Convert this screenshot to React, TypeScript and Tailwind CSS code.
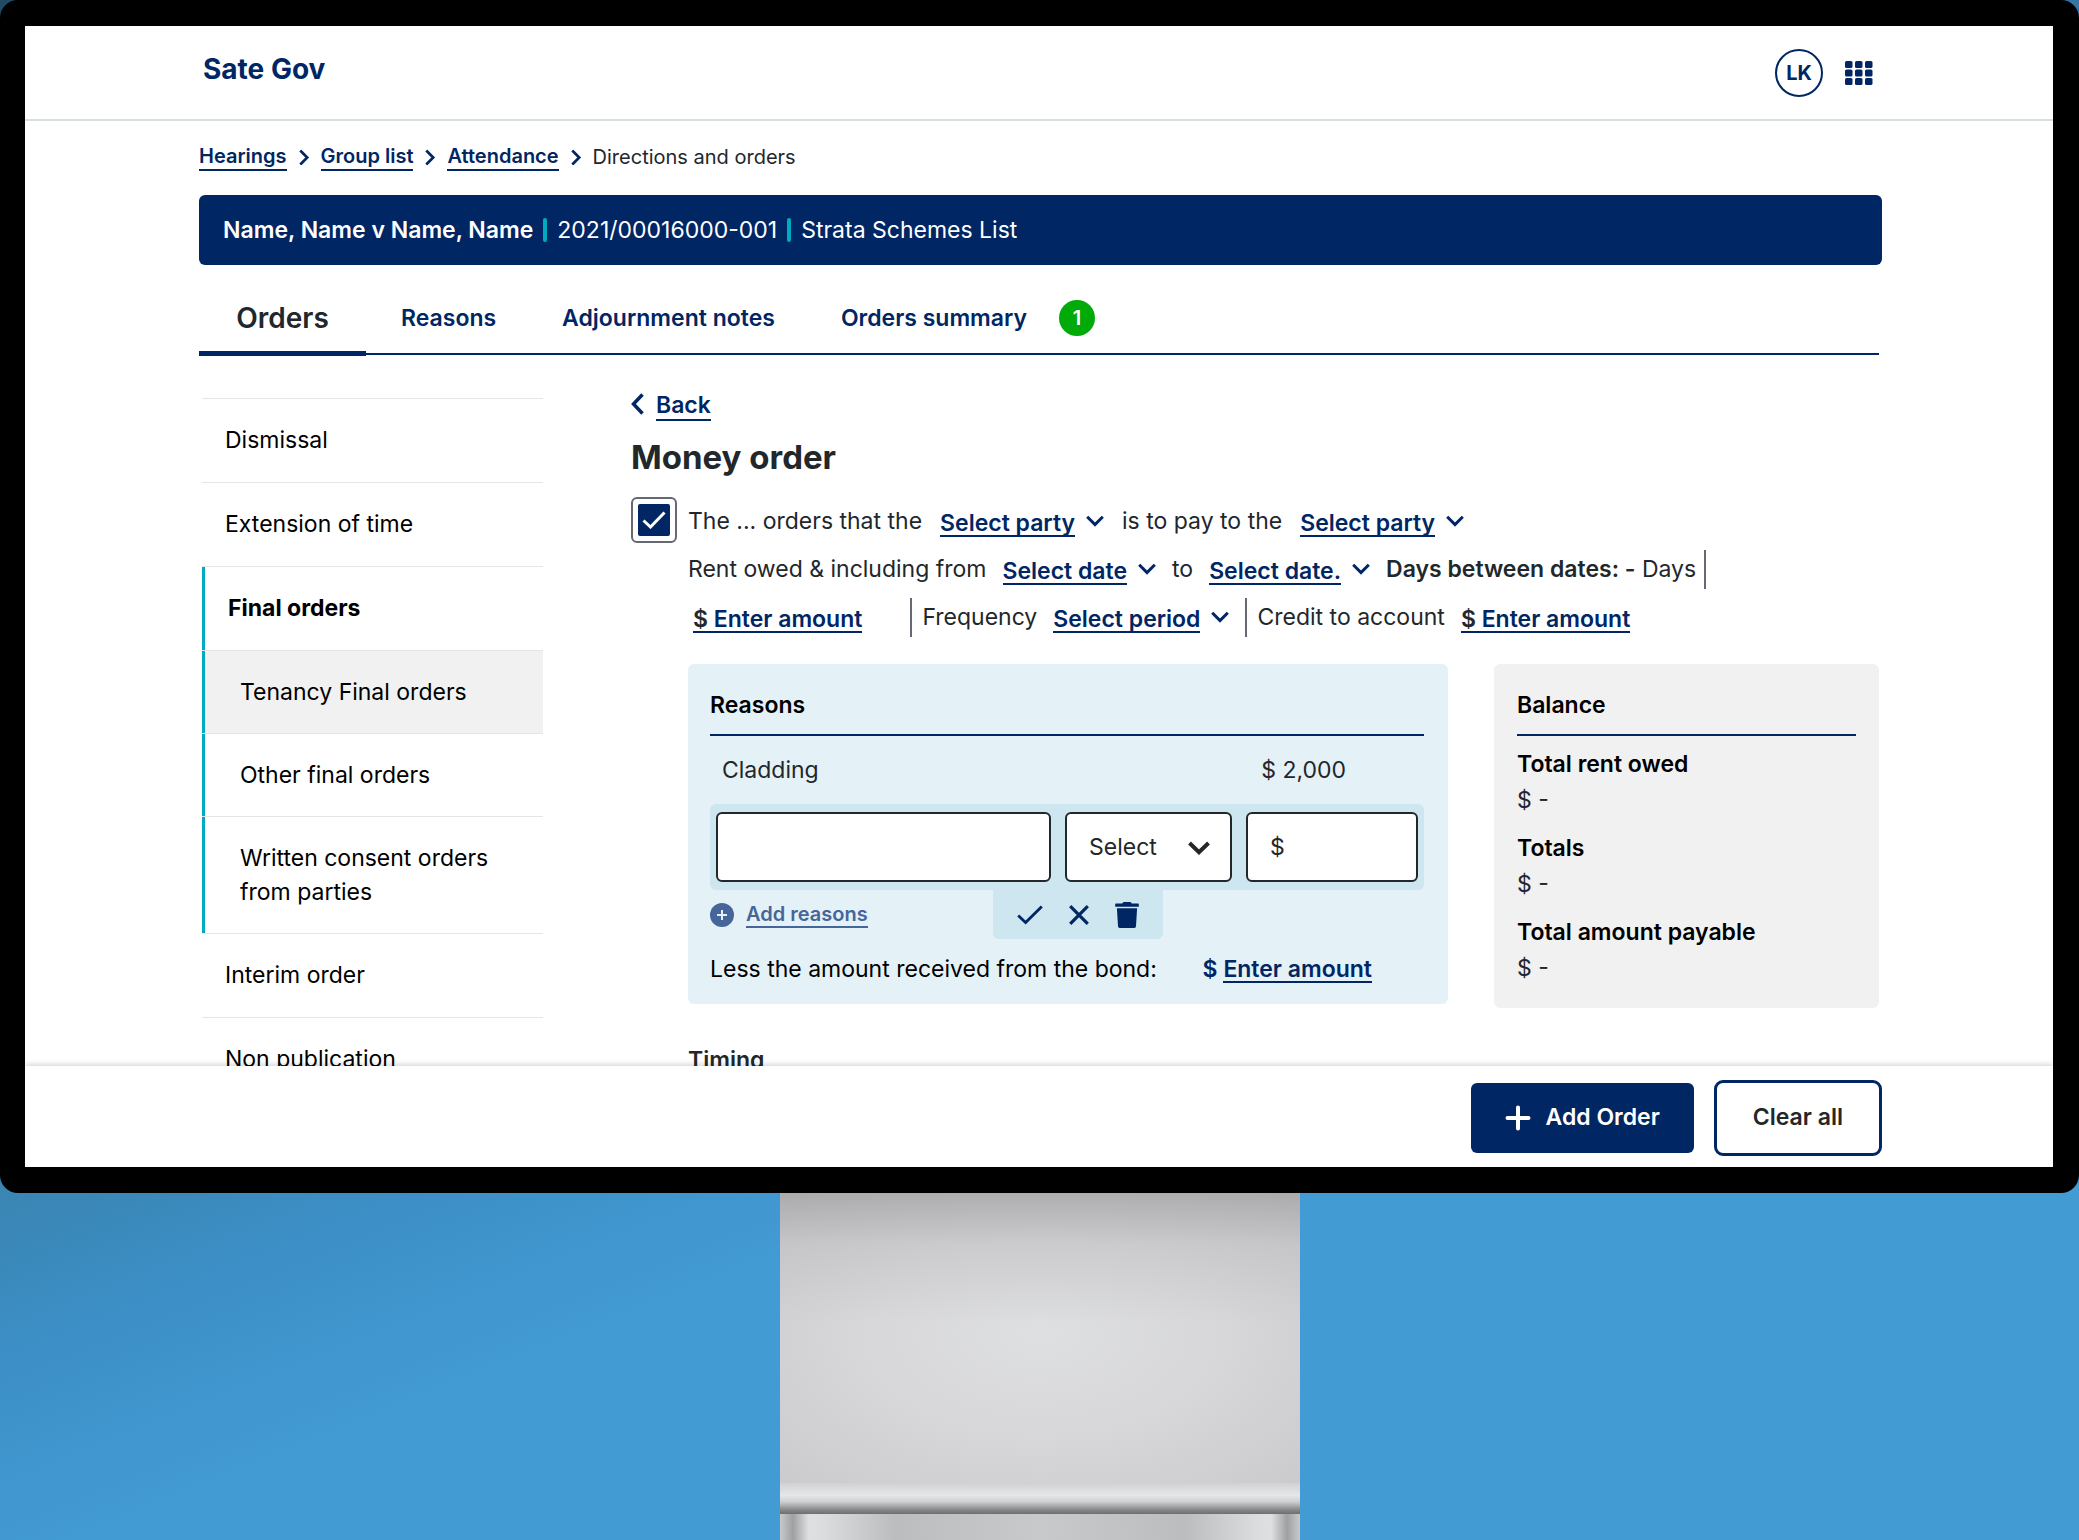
import React, { useState } from 'react';

const breadcrumbs = ['Hearings', 'Group list', 'Attendance'];

const tabs = ['Reasons', 'Adjournment notes', 'Orders summary'];

const menuItems = [
  { name: 'Dismissal', level: 0 },
  { name: 'Extension of time', level: 0 },
  { name: 'Final orders', level: 1 },
  { name: 'Tenancy Final orders', level: 2, active: true },
  { name: 'Other final orders', level: 2 },
  { name: 'Written consent orders from parties', level: 2 },
  { name: 'Interim order', level: 0 },
  { name: 'Non publication', level: 0 },
];

const levelClasses = [
  'pb-[25px] pl-[23px] before:hidden',
  'pb-[25px] pl-[26px] font-bold',
  'pb-6 pl-[38px]',
];

const balances = ['Total rent owed', 'Totals', 'Total amount payable'];

function Chevron({ className }: { className: string }) {
  return (
    <svg viewBox="0 0 18 12" className={className} fill="none" stroke="currentColor" strokeWidth="3" aria-hidden="true">
      <path d="M1.2 1.8 9 9.6l7.8-7.8" />
    </svg>
  );
}

function InlineSelect({ label, text }: { label: string; text: string }) {
  return (
    <span className="flex items-center gap-[11px] text-[#002664]">
      <select
        aria-label={label}
        className="field-sizing-content h-[31px] appearance-none border-b-2 border-[#002664] bg-transparent p-0 font-semibold"
      >
        <option>{text}</option>
      </select>
      <Chevron className="h-3 w-[18px]" />
    </span>
  );
}

function AmountButton() {
  return (
    <button className="h-[31px] border-b-2 border-[#002664] font-semibold text-[#002664]">
      <span className="text-[#22272b]">$</span> Enter amount
    </button>
  );
}

function Header() {
  return (
    <header className="flex h-[95px] shrink-0 items-center justify-between border-b-2 border-[#d8dfe0] pr-[180px] pl-[178px] text-[#002664]">
      <a href="#" className="pb-2 text-[28px] leading-8 font-bold">Sate Gov</a>
      <div className="flex items-center gap-[22px]">
        <button className="size-12 rounded-full border-2 border-[#002664] text-[20px] font-bold">LK</button>
        <button aria-label="Apps">
          <svg viewBox="0 0 28 24" className="h-6 w-7" fill="currentColor">
            {[0, 8.5, 17].map(y =>
              [0, 10, 20].map(x => <rect key={`${x}-${y}`} x={x} y={y} width="7.5" height="7" rx="1.6" />)
            )}
          </svg>
        </button>
      </div>
    </header>
  );
}

function Sidebar() {
  return (
    <nav className="mt-[43px] ml-[3px] w-[341px] shrink-0 border-t border-[#e4e6e6] text-black">
      {menuItems.map(item => (
        <a
          key={item.name}
          href="#"
          className={`relative block border-b border-[#e4e6e6] pt-6 pr-10 leading-[34px] before:absolute before:inset-y-0 before:left-0 before:w-[3px] before:bg-[#00abc2] ${levelClasses[item.level]} ${item.active ? 'bg-[#f1f1f1]' : ''}`}
        >
          {item.name}
        </a>
      ))}
    </nav>
  );
}

function ReasonsPanel() {
  return (
    <section className="min-w-0 flex-1 rounded-[6px] bg-[#e4f1f7] pt-3 pr-6 pb-[5px] pl-[22px]">
      <h2 className="flex h-[58px] items-center font-semibold text-black">Reasons</h2>
      <div className="flex h-[70px] items-center justify-between border-t-2 border-[#002664] pr-[78px] pl-3">
        <span>Cladding</span>
        <span>$ 2,000</span>
      </div>
      <div className="flex h-[86px] items-center gap-[14px] rounded-[6px] bg-[#cde6ef] px-[6px]">
        <input aria-label="Reason" className="h-[70px] min-w-0 flex-1 rounded-[6px] border-2 border-[#22272b] bg-white px-5" />
        <div className="relative h-[70px] w-[167px]">
          <select aria-label="Type" className="size-full appearance-none rounded-[6px] border-2 border-[#22272b] bg-white pl-[22px]">
            <option>Select</option>
          </select>
          <svg viewBox="0 0 22 14" className="pointer-events-none absolute top-[29px] right-[22px] h-[14px] w-[22px]" fill="none" stroke="currentColor" strokeWidth="4" aria-hidden="true">
            <path d="M1.5 2 11 11.2 20.5 2" />
          </svg>
        </div>
        <label className="flex h-[70px] w-[172px] items-center rounded-[6px] border-2 border-[#22272b] bg-white pl-[22px]">
          $
          <input aria-label="Amount" className="ml-2 min-w-0 flex-1 outline-none" />
        </label>
      </div>
      <div className="flex h-[49px] items-center text-[#002664]">
        <button className="flex w-[283px] items-center gap-3 text-[20px] font-semibold text-[#46659a]">
          <svg viewBox="0 0 24 24" className="size-6" aria-hidden="true">
            <circle cx="12" cy="12" r="12" fill="currentColor" />
            <path d="M12 7v10M7 12h10" stroke="#e4f1f7" strokeWidth="2" />
          </svg>
          <span className="border-b-2 border-[#46659a] leading-6">Add reasons</span>
        </button>
        <div className="flex h-full w-[170px] items-center justify-center gap-[26px] rounded-b-[6px] bg-[#cde6ef]">
          <button aria-label="Save">
            <svg viewBox="0 0 26 20" className="h-5 w-[26px]" fill="none" stroke="currentColor" strokeWidth="2.8">
              <path d="M1.2 10.5 8.6 17.6 24.8 1.4" />
            </svg>
          </button>
          <button aria-label="Cancel">
            <svg viewBox="0 0 20 20" className="size-5" fill="none" stroke="currentColor" strokeWidth="3.2">
              <path d="M1.2 1.2 18.8 18.8M18.8 1.2 1.2 18.8" />
            </svg>
          </button>
          <button aria-label="Delete">
            <svg viewBox="0 0 24 26" className="h-[26px] w-6" fill="currentColor">
              <path d="M8.5 0h7l1.3 1.4h6.2a.8.8 0 0 1 .8.8v2.600H.2V2.200a.8.8 0 0 1 .8-.8h6.200zM1.900 6.200h20.200l-1.100 18a1.800 1.800 0 0 1-1.800 1.800H4.800a1.800 1.800 0 0 1-1.800-1.800z" />
            </svg>
          </button>
        </div>
      </div>
      <div className="flex h-[60px] items-center justify-between pr-[52px] text-black">
        <span>Less the amount received from the bond:</span>
        <span className="flex items-baseline gap-[6px] font-semibold text-[#002664]">
          $ <button className="h-[31px] border-b-2 border-[#002664]">Enter amount</button>
        </span>
      </div>
    </section>
  );
}

function BalancePanel() {
  return (
    <section className="w-[385px] shrink-0 rounded-[6px] bg-[#f1f1f1] px-[23px] pt-3 pb-[22px]">
      <h2 className="flex h-[58px] items-center font-semibold text-black">Balance</h2>
      <dl className="flex flex-col gap-3 border-t-2 border-[#002664] pt-[10px] leading-9">
        {balances.map(name => (
          <div key={name}>
            <dt className="font-semibold text-black">{name}</dt>
            <dd>$ -</dd>
          </div>
        ))}
      </dl>
    </section>
  );
}

export default function App() {
  const [checked, setChecked] = useState(true);

  return (
    <div className="flex h-screen flex-col overflow-hidden bg-[linear-gradient(158deg,#204a66_0%,#3577a6_36%,#3a86b5_51%,#3c8fc6_57%,#439bd4_66%)] font-['Inter','Noto_Sans',sans-serif] text-[23px] text-[#22272b]">
      <div className="min-h-0 flex-1 rounded-[18px] border-[26px] border-l-[25px] border-black bg-black">
        <div className="flex h-full flex-col bg-white">
          <Header />

          <div className="min-h-0 flex-1 overflow-hidden pr-[171px] pl-[174px]">
            <nav aria-label="Breadcrumb" className="flex items-center pt-[23px] pb-6 text-[20px] leading-[25px]">
              {breadcrumbs.map(name => (
                <React.Fragment key={name}>
                  <a href="#" className="h-[27px] border-b-2 border-[#002664] font-semibold text-[#002664]">{name}</a>
                  <Chevron className="mx-[9px] h-[11px] w-4 -rotate-90 text-[#002664]" />
                </React.Fragment>
              ))}
              <span>Directions and orders</span>
            </nav>

            <div className="flex h-[70px] items-center gap-[10px] rounded-[6px] bg-[#002664] px-6 text-white">
              <span className="font-semibold">Name, Name v Name, Name</span>
              <span className="h-6 w-1 rounded-full bg-[#00abc2]" />
              <span>2021/00016000-001</span>
              <span className="h-6 w-1 rounded-full bg-[#00abc2]" />
              <span>Strata Schemes List</span>
            </div>

            <nav aria-label="Sections" className="mr-[3px] flex h-[90px] border-b-2 border-[#002664] pt-[18px] font-semibold text-[#002664]">
              <a href="#" className="relative flex w-[167px] items-center justify-center text-[28px] text-[#22272b] after:absolute after:inset-x-0 after:-bottom-[3px] after:h-[5px] after:bg-[#002664]">
                Orders
              </a>
              <div className="ml-[35px] flex items-center gap-[66px]">
                {tabs.map(tab => (
                  <a key={tab} href="#">{tab}</a>
                ))}
              </div>
              <span className="ml-8 flex size-9 items-center justify-center self-center rounded-full bg-[#00aa08] text-[20px] text-white">1</span>
            </nav>

            <div className="flex pr-[3px]">
              <Sidebar />

              <main className="ml-[88px] min-w-0 flex-1 pt-[35px]">
                <a href="#" className="flex h-[31px] items-center gap-3 font-semibold text-[#002664]">
                  <svg viewBox="0 0 13 22" className="mb-1 h-[22px] w-[13px]" fill="none" stroke="currentColor" strokeWidth="3.5" aria-hidden="true">
                    <path d="M11.5 1.5 2.5 11l9 9.5" />
                  </svg>
                  <span className="h-[30px] border-b-2 border-[#002664] leading-[29px]">Back</span>
                </a>
                <h1 className="mt-4 text-[33px] leading-10 font-bold">Money order</h1>

                <div className="mt-5 flex gap-[11px]">
                  <span className="relative flex size-[46px] shrink-0 items-center justify-center rounded-[6px] border-2 border-[#646974]">
                    <input
                      type="checkbox"
                      aria-label="Include this order"
                      checked={checked}
                      onChange={e => setChecked(e.target.checked)}
                      className="size-8 appearance-none rounded-[2px] border-2 border-[#002664] checked:bg-[#002664]"
                    />
                    {checked && (
                      <svg viewBox="0 0 24 18" className="pointer-events-none absolute h-[18px] w-6" fill="none" stroke="white" strokeWidth="3" aria-hidden="true">
                        <path d="M1.5 9.5 8.5 16 22.5 1.5" />
                      </svg>
                    )}
                  </span>

                  <div className="min-w-0 flex-1">
                    <div className="flex h-12 items-center gap-[18px]">
                      <span>The ... orders that the</span>
                      <InlineSelect label="Paying party" text="Select party" />
                      <span>is to pay to the</span>
                      <InlineSelect label="Receiving party" text="Select party" />
                    </div>
                    <div className="flex h-12 items-center gap-4">
                      <span>Rent owed &amp; including from</span>
                      <InlineSelect label="Start date" text="Select date" />
                      <span>to</span>
                      <InlineSelect label="End date" text="Select date." />
                      <span className="border-r-2 border-[#646974] pr-2 leading-[39px]">
                        <b className="font-semibold">Days between dates: -</b> Days
                      </span>
                    </div>
                    <div className="flex h-12 items-center gap-4 pl-[5px]">
                      <AmountButton />
                      <span className="ml-8 border-l-2 border-[#646974] pl-[10px] leading-[39px]">Frequency</span>
                      <InlineSelect label="Frequency" text="Select period" />
                      <span className="border-l-2 border-[#646974] pl-[10px] leading-[39px]">Credit to account</span>
                      <AmountButton />
                    </div>

                    <div className="mt-[23px] flex items-start gap-[46px]">
                      <ReasonsPanel />
                      <BalancePanel />
                    </div>

                    <h2 className="mt-[38px] leading-7 font-semibold">Timing</h2>
                  </div>
                </div>
              </main>
            </div>
          </div>

          <footer className="relative flex h-[101px] shrink-0 items-center justify-end gap-5 bg-white pt-0.5 pr-[171px] font-semibold shadow-[0_-1px_6px_rgba(0,0,0,0.2)]">
            <button className="flex h-[70px] items-center gap-[15px] rounded-[6px] bg-[#002664] px-[34px] text-white">
              <svg viewBox="0 0 26 26" className="size-[26px]" stroke="currentColor" strokeWidth="4" strokeLinecap="round" aria-hidden="true">
                <path d="M13 2.5v21M2.5 13h21" />
              </svg>
              Add Order
            </button>
            <button className="h-[76px] rounded-[9px] border-3 border-[#002664] px-9">Clear all</button>
          </footer>
        </div>
      </div>

      {/* Monitor stand */}
      <div className="mx-auto flex h-[347px] w-[520px] shrink-0 flex-col">
        <div className="flex-1 bg-[linear-gradient(180deg,rgba(150,150,152,0.6)_0%,rgba(180,180,182,0.35)_18%,rgba(220,220,222,0)_45%),radial-gradient(ellipse_at_50%_48%,#dedfe1_0%,#d8d8da_45%,#cbcbcd_100%)]" />
        <div className="h-[31px] bg-[linear-gradient(180deg,#d1d1d3_0%,#e6e7e9_40%,#cfd0d1_60%,#8c8c8d_85%,#6e6e6d_100%)]" />
        <div className="h-[26px] bg-[linear-gradient(90deg,#c8c9cb_0%,#9fa0a2_2.5%,#dedfe1_5.5%,#dcdddf_8%,#bbbdbf_22%,#c8c9ca_50%,#bbbdbf_78%,#dcdddf_92%,#dedfe1_94.5%,#9fa0a2_97.5%,#c8c9cb_100%)]" />
      </div>
    </div>
  );
}
